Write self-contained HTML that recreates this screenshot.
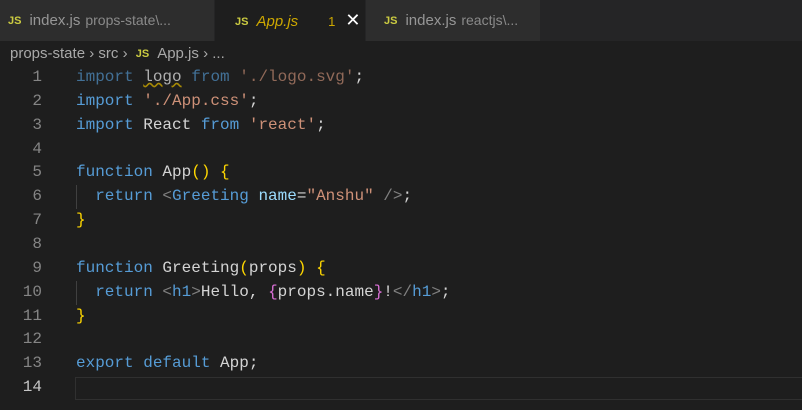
<!DOCTYPE html>
<html><head><meta charset="utf-8"><style>
body{margin:0;width:802px;height:410px;background:#1e1e1e;overflow:hidden;font-family:"Liberation Sans",sans-serif;}
.tabs{position:absolute;top:0;left:0;width:802px;height:41px;background:#252526;}
.tab{position:absolute;top:0;height:41px;background:#2d2d2d;color:#969696;font-size:15px;line-height:41px;white-space:nowrap;}
.js{color:#cbcb41;font-weight:bold;font-size:11px;margin-right:8px;vertical-align:1px;}
.desc{color:#8a8a8a;font-size:14px;margin-left:5px;}
.bc{position:absolute;top:41px;left:10px;height:26px;line-height:26px;color:#a9a9a9;font-size:15px;}
.code{position:absolute;top:66px;left:0;font-family:"Liberation Mono",monospace;font-size:16px;}
.ln{position:absolute;left:0;width:42px;text-align:right;color:#858585;height:23.85px;line-height:23.85px;}
.l{position:absolute;left:76px;white-space:pre;color:#d4d4d4;height:23.85px;line-height:23.85px;}
.k{color:#569cd6}.s{color:#ce9178}.y{color:#ffd700}.p{color:#da70d6}.g{color:#808080}.a{color:#9cdcfe}
.guide{position:absolute;left:76px;width:1px;background:#404040;}
</style></head><body>
<div class="tabs">
<div class="tab" style="left:0;width:214px;padding-left:8px;box-sizing:border-box;"><span class="js">JS</span>index.js<span class="desc">props-state\...</span></div>
<div class="tab" style="left:215px;width:150px;background:#1e1e1e;padding-left:20px;box-sizing:border-box;"><span class="js">JS</span><span style="color:#cca700;font-style:italic">App.js</span><span style="color:#cca700;font-size:13px;margin-left:30px">1</span><span style="color:#fff;font-size:18px;margin-left:10px">✕</span></div>
<div class="tab" style="left:366px;width:174px;padding-left:18px;box-sizing:border-box;"><span class="js">JS</span>index.js<span class="desc">reactjs\...</span></div>
</div>
<div class="bc">props-state <span>›</span> src <span>›</span> <span class="js" style="margin-left:4px">JS</span>App.js <span>›</span> ...</div>
<div class="guide" style="top:185px;height:24px"></div>
<div class="guide" style="top:281px;height:24px"></div>
<div style="position:absolute;left:75px;top:377px;width:740px;height:21px;border:1px solid #303030;"></div>
<div class="code">
<div class="ln" style="top:0">1</div><div class="l" style="top:0"><span class="k" style="opacity:.65">import</span> <span style="text-decoration:underline wavy #cca700;opacity:.8">logo</span> <span class="k" style="opacity:.65">from</span> <span class="s" style="opacity:.65">'./logo.svg'</span>;</div>
<div class="ln" style="top:23.85px">2</div><div class="l" style="top:23.85px"><span class="k">import</span> <span class="s">'./App.css'</span>;</div>
<div class="ln" style="top:47.7px">3</div><div class="l" style="top:47.7px"><span class="k">import</span> React <span class="k">from</span> <span class="s">'react'</span>;</div>
<div class="ln" style="top:71.55px">4</div>
<div class="ln" style="top:95.4px">5</div><div class="l" style="top:95.4px"><span class="k">function</span> App<span class="y">()</span> <span class="y">{</span></div>
<div class="ln" style="top:119.25px">6</div><div class="l" style="top:119.25px">  <span class="k">return</span> <span class="g">&lt;</span><span class="k">Greeting</span> <span class="a">name</span>=<span class="s">"Anshu"</span> <span class="g">/&gt;</span>;</div>
<div class="ln" style="top:143.1px">7</div><div class="l" style="top:143.1px"><span class="y">}</span></div>
<div class="ln" style="top:166.95px">8</div>
<div class="ln" style="top:190.8px">9</div><div class="l" style="top:190.8px"><span class="k">function</span> Greeting<span class="y">(</span>props<span class="y">)</span> <span class="y">{</span></div>
<div class="ln" style="top:214.65px">10</div><div class="l" style="top:214.65px">  <span class="k">return</span> <span class="g">&lt;</span><span class="k">h1</span><span class="g">&gt;</span>Hello, <span class="p">{</span>props.name<span class="p">}</span>!<span class="g">&lt;/</span><span class="k">h1</span><span class="g">&gt;</span>;</div>
<div class="ln" style="top:238.5px">11</div><div class="l" style="top:238.5px"><span class="y">}</span></div>
<div class="ln" style="top:262.35px">12</div>
<div class="ln" style="top:286.2px">13</div><div class="l" style="top:286.2px"><span class="k">export</span> <span class="k">default</span> App;</div>
<div class="ln" style="top:310.05px;color:#c6c6c6">14</div>
</div>
</body></html>
